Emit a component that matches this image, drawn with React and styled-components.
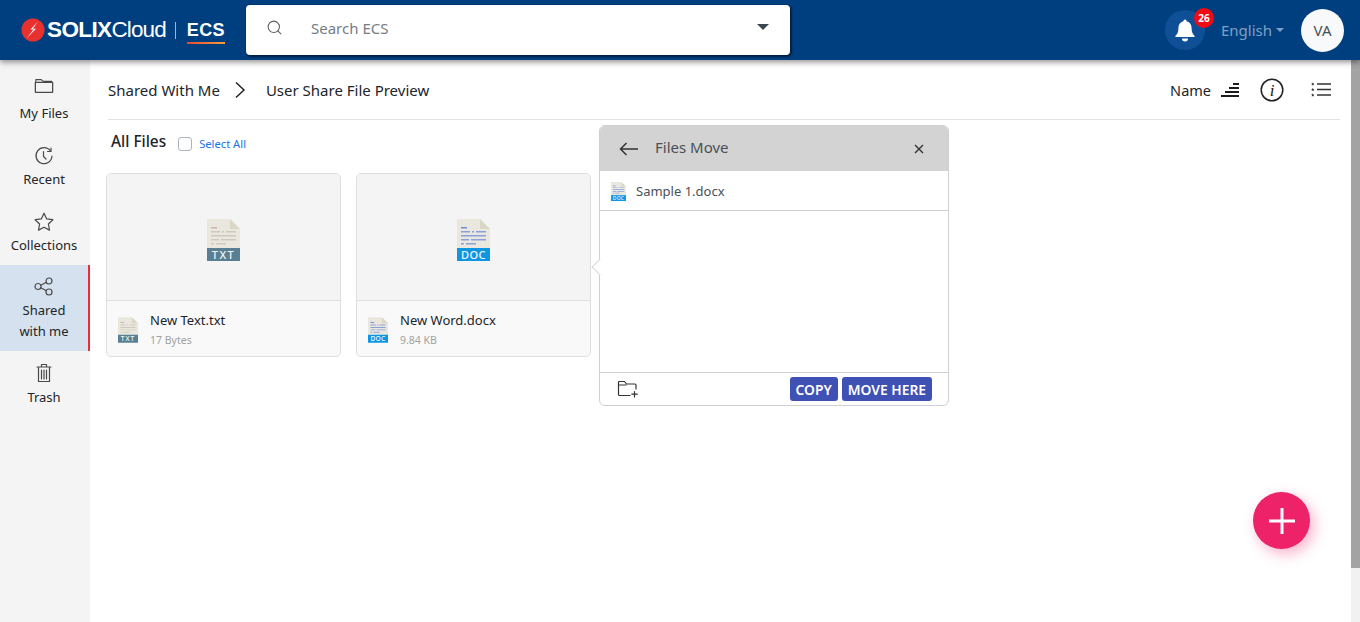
import React from 'react';
import styled, { createGlobalStyle } from 'styled-components';
import { Search } from 'lucide-react';

const GlobalStyle = createGlobalStyle`
  html, body {
    margin: 0;
    height: 100%;
    overflow: hidden;
    background: #fff;
    font-family: "Noto Sans", "Open Sans", sans-serif;
    color: #212529;
  }
  * { box-sizing: border-box; }
`;

const Page = styled.div`
  width: 1360px;
  height: 622px;
  display: flex;
  flex-direction: column;
  position: relative;
  overflow: hidden;
`;

const Header = styled.header`
  height: 60px;
  flex: none;
  background: #003f7f;
  display: flex;
  align-items: center;
  padding: 0 16px 0 21px;
  box-shadow: 0 2px 6px rgba(0, 0, 0, 0.45);
  position: relative;
  z-index: 2;
`;

const Logo = styled.div`
  display: flex;
  align-items: center;
  width: 225px;
  color: #fff;
  font-family: "Liberation Sans", sans-serif;
`;

const LogoBold = styled.span`
  font-weight: 700;
  font-size: 22.5px;
  letter-spacing: -0.6px;
  margin-left: 2px;
`;

const LogoLight = styled.span`
  font-size: 22.5px;
  letter-spacing: -0.9px;
`;

const LogoDivider = styled.span`
  width: 1px;
  height: 17px;
  background: #9db6d0;
  margin: 0 11px 0 9px;
`;

const LogoEcs = styled.span`
  font-weight: 700;
  font-size: 18px;
  letter-spacing: 0.4px;
  line-height: 22px;
  padding-bottom: 1px;
  border-bottom: 2px solid;
  border-image: linear-gradient(90deg, #e8452f, #f3a33b) 1;
  margin-top: 2px;
`;

const SearchBox = styled.div`
  width: 544px;
  height: 50px;
  background: #fff;
  border-radius: 4px;
  box-shadow: 1px 1px 2px 1px rgba(0, 0, 0, 0.5);
  display: flex;
  align-items: center;
  padding: 0 21px 0 20px;
  color: #5f5f5f;
  svg { flex: none; margin-bottom: 5px; }
`;

const SearchText = styled.span`
  flex: 1;
  font-size: 15px;
  color: #757d85;
  margin-left: 28px;
  margin-bottom: 4px;
`;

const Caret = styled.span`
  width: 0;
  height: 0;
  border-left: ${(p) => p.$size}px solid transparent;
  border-right: ${(p) => p.$size}px solid transparent;
  border-top: ${(p) => p.$size}px solid ${(p) => p.$color};
  margin-bottom: ${(p) => p.$lift || 0}px;
`;

const HeaderRight = styled.div`
  margin-left: auto;
  display: flex;
  align-items: center;
`;

const BellWrap = styled.div`
  width: 40px;
  height: 40px;
  border-radius: 50%;
  background: #0e4f96;
  display: flex;
  align-items: center;
  justify-content: center;
  position: relative;
`;

const Badge = styled.span`
  position: absolute;
  top: -2px;
  right: -9px;
  width: 20px;
  height: 20px;
  border-radius: 50%;
  background: #f00a14;
  color: #fff;
  font-size: 10px;
  font-weight: 700;
  display: flex;
  align-items: center;
  justify-content: center;
`;

const Lang = styled.div`
  display: flex;
  align-items: center;
  gap: 4px;
  margin-left: 16px;
  margin-right: 17px;
  font-size: 15px;
  color: #7f9fc4;
`;

const Avatar = styled.div`
  width: 43px;
  height: 43px;
  border-radius: 50%;
  background: #f8f9fa;
  color: #495057;
  font-size: 15px;
  display: flex;
  align-items: center;
  justify-content: center;
`;

const Body = styled.div`
  flex: 1;
  display: flex;
  min-height: 0;
`;

const Sidebar = styled.nav`
  width: 90px;
  flex: none;
  background: #f4f4f4;
  padding-top: 17px;
`;

const NavItem = styled.div`
  display: flex;
  flex-direction: column;
  align-items: center;
  height: ${(p) => p.$height}px;
  padding-top: ${(p) => p.$top || 0}px;
  font-size: 13px;
  line-height: 21px;
  text-align: center;
  color: #212529;
  background: ${(p) => (p.$active ? '#d5e1ee' : 'transparent')};
  border-right: 2px solid ${(p) => (p.$active ? '#ee2b36' : 'transparent')};
  svg { display: block; margin-bottom: ${(p) => p.$gap}px; }
`;

const Main = styled.main`
  flex: 1;
  min-width: 0;
  position: relative;
  padding: 0 11px 0 16px;
`;

const TopRow = styled.div`
  height: 60px;
  margin-left: 2px;
  border-bottom: 1px solid #e3e3e3;
  display: flex;
  align-items: center;
  font-size: 15px;
`;

const Crumb = styled.span`
  white-space: nowrap;
`;

const CrumbSep = styled.span`
  display: flex;
  margin: 0 20px 0 14px;
`;

const Tools = styled.div`
  margin-left: auto;
  display: flex;
  align-items: center;
  padding-right: 9px;
`;

const ToolLabel = styled.span`
  font-size: 14.5px;
  margin-right: 10px;
`;

const ToolIcon = styled.span`
  display: flex;
  margin-left: ${(p) => p.$gap || 0}px;
`;

const FilesHead = styled.div`
  display: flex;
  align-items: center;
  height: 44px;
  padding-left: 5px;
`;

const FilesTitle = styled.span`
  font-size: 15.4px;
  font-weight: 500;
  margin-top: -2px;
`;

const Check = styled.span`
  width: 14px;
  height: 14px;
  border: 1px solid #adb5bd;
  border-radius: 3px;
  background: #fff;
  margin: 4px 0 0 12px;
`;

const SelectAll = styled.span`
  font-size: 11.2px;
  color: #1a73e8;
  margin: 2px 0 0 7px;
`;

const Cards = styled.div`
  display: flex;
  gap: 15px;
  margin-top: 9px;
`;

const Card = styled.div`
  width: 235px;
  height: 184px;
  border: 1px solid #dfdfdf;
  border-radius: 5px;
  background: #f9f9f9;
  overflow: hidden;
`;

const Thumb = styled.div`
  height: 127px;
  background: #f4f4f4;
  border-bottom: 1px solid #dfdfdf;
  padding-top: 5px;
  display: flex;
  align-items: center;
  justify-content: center;
`;

const CardInfo = styled.div`
  display: flex;
  align-items: center;
  padding: 2px 0 0 11px;
  height: 55px;
`;

const CardText = styled.div`
  margin-left: 12px;
  margin-top: 1px;
`;

const CardName = styled.div`
  font-size: 13px;
  line-height: 20px;
`;

const CardSize = styled.div`
  font-size: 10.5px;
  line-height: 20px;
  color: #a1a1a1;
`;

const Popover = styled.div`
  position: absolute;
  left: 509px;
  top: 65px;
  width: 350px;
  height: 281px;
  background: #fff;
  border: 1px solid #cfcfcf;
  border-radius: 6px;
  display: flex;
  flex-direction: column;
  &::before {
    content: '';
    position: absolute;
    left: -6px;
    top: 135px;
    width: 11px;
    height: 11px;
    background: #fff;
    border-left: 1px solid #d8d8d8;
    border-bottom: 1px solid #d8d8d8;
    transform: rotate(45deg);
  }
`;

const PopHead = styled.div`
  height: 45px;
  flex: none;
  background: #d3d3d3;
  border-radius: 5px 5px 0 0;
  display: flex;
  align-items: center;
  padding: 0 24px 0 19px;
  font-size: 15px;
  color: #495057;
`;

const PopTitle = styled.span`
  flex: 1;
  margin-left: 16px;
  margin-top: -4px;
`;

const PopFile = styled.div`
  height: 40px;
  flex: none;
  border-top: 1px solid #fff;
  border-bottom: 1px solid #cfcfcf;
  display: flex;
  align-items: center;
  padding-left: 11px;
  font-size: 13px;
  color: #495057;
  gap: 10px;
`;

const PopBody = styled.div`
  flex: 1;
`;

const PopFooter = styled.div`
  height: 33px;
  flex: none;
  border-top: 1px solid #cfcfcf;
  display: flex;
  align-items: center;
  padding: 0 16px 0 17px;
  gap: 4px;
`;

const FolderBtn = styled.span`
  display: flex;
  margin-right: auto;
`;

const ActionBtn = styled.button`
  height: 24px;
  border: 0;
  border-radius: 3px;
  background: #3f51b5;
  color: #fff;
  font-family: inherit;
  font-size: 13.8px;
  font-weight: 600;
  padding: 0 6px;
  white-space: nowrap;
`;

const Fab = styled.button`
  position: absolute;
  right: 41px;
  top: 432px;
  width: 57px;
  height: 57px;
  padding: 0;
  border: 0;
  border-radius: 50%;
  background: #ee2268;
  box-shadow: 4px 5px 14px rgba(238, 34, 104, 0.35);
  display: flex;
  align-items: center;
  justify-content: center;
`;

const ScrollTrack = styled.div`
  width: 9px;
  flex: none;
  background: #f1f1f1;
`;

const ScrollThumb = styled.div`
  height: 508px;
  background: #a3a3a3;
`;

const FileIcon = ({ kind, size }) => {
  const band = kind === 'DOC' ? '#0f96e2' : '#5a7f93';
  const line = kind === 'DOC' ? '#8aa0dd' : '#cfc8bc';
  const head = kind === 'DOC' ? '#6f8fd8' : '#cdb4ae';
  const w = size === 'lg' ? 33 : size === 'md' ? 20 : 15;
  const h = size === 'lg' ? 42 : size === 'md' ? 26 : 19;
  return (
    <svg width={w} height={h} viewBox="0 0 33 42" style={{ flex: 'none' }}>
      <path d="M0 0h23l10 10v20H0z" fill="#eae8de" />
      <path d="M23 0l10 10H23z" fill="#d9d7c5" />
      <path d="M4 8h6v1.5H4z" fill={head} />
      <path d="M4 12h9v1.5H4zM15 12h2v1.5h-2zM19 12h10v1.5H19zM4 16h25v1.5H4zM4 20h8v1.5H4zM14 20h15v1.5H14zM4 24h3v1.5H4zM9 24h10v1.5H9z" fill={line} />
      <path d="M0 29h33v13H0z" fill={band} />
      <text x="16.5" y="39.5" textAnchor="middle" fontSize="11" fontWeight="500" fill="#f2f5f7" letterSpacing={kind === 'TXT' ? 1.5 : 0.5} fontFamily="Noto Sans, sans-serif">{kind}</text>
    </svg>
  );
};

const strokeProps = { fill: 'none', stroke: '#4a4a4a', strokeWidth: 1.2, strokeLinecap: 'round', strokeLinejoin: 'round' };

const FolderIcon = () => (
  <svg width="20" height="17" viewBox="0 0 22 18" {...strokeProps}>
    <path d="M1.5 16.5V5.5h19v11z" strokeWidth="1.4" />
    <path d="M2 5V2.5h6l2 2h9.5v1" />
  </svg>
);

const RecentIcon = () => (
  <svg width="20" height="20" viewBox="0 0 20 20" {...strokeProps}>
    <path d="M16.5 5A8 8 0 1 0 18 10" />
    <path d="M13.5 5.5h3.5V2M9.5 5.5V10.5L12 13" />
  </svg>
);

const StarIcon = () => (
  <svg width="20" height="19" viewBox="0 0 20 19" {...strokeProps}>
    <path d="M10 1.2l2.7 5.7 6.2.8-4.5 4.3 1.1 6.1L10 15.2l-5.5 2.9 1.1-6.1L1.1 7.7l6.2-.8z" />
  </svg>
);

const ShareIcon = () => (
  <svg width="20" height="19" viewBox="0 0 20 19" {...strokeProps}>
    <circle cx="15" cy="4" r="3" />
    <circle cx="15" cy="15" r="3" />
    <circle cx="4" cy="9.5" r="3" />
    <path d="M6.8 8.2l5.6-3M6.8 10.8l5.6 3" />
  </svg>
);

const TrashIcon = () => (
  <svg width="16" height="20" viewBox="0 0 16 20" {...strokeProps}>
    <path d="M1 4h14M5.5 4V1.5h5V4M2.5 4v14.5h11V4M5.5 7v9M8 7v9M10.5 7v9" />
  </svg>
);

const BoltLogo = () => (
  <svg width="24" height="24" viewBox="0 0 24 24">
    <circle cx="12" cy="12" r="11.5" fill="#e8302e" />
    <path d="M17 3.5L9.5 11.5h3L5.5 20.5l9.5-9.7h-3.2L17 3.5z" fill="#fff" />
  </svg>
);

const BellIcon = () => (
  <svg width="22" height="24" viewBox="0 0 22 24" fill="#fff">
    <path d="M11 1.5a1.6 1.6 0 0 1 1.6 1.7c3.4.8 5 3.6 5 7 0 4 1 5.6 3 7.8V19H1.4v-1c2-2.2 3-3.8 3-7.8 0-3.4 1.6-6.2 5-7A1.6 1.6 0 0 1 11 1.5z" />
    <path d="M8 20.5h6a3 3 0 0 1-6 0z" />
  </svg>
);

const SortIcon = () => (
  <svg width="18" height="14" viewBox="0 0 18 14" fill="#1c1c1c">
    <path d="M12 0h6v2h-6zM8 4h10v2H8zM4 8h14v2H4zM0 12h18v2H0z" />
  </svg>
);

const InfoIcon = () => (
  <svg width="24" height="24" viewBox="0 0 24 24">
    <circle cx="12" cy="12" r="10.8" fill="none" stroke="#222" strokeWidth="1.5" />
    <text x="12" y="18" textAnchor="middle" fontFamily="Liberation Serif, serif" fontStyle="italic" fontSize="17" fill="#222">i</text>
  </svg>
);

const star = 'l.5 1.1 1.2.1-.9.8.3 1.2-1.1-.6-1.1.6.3-1.2-.9-.8 1.2-.1z';

const ListIcon = () => (
  <svg width="20" height="15" viewBox="0 0 20 15" fill="#333">
    <path d="M6 1.2h14v1.5H6zM6 6.7h14v1.5H6zM6 12.2h14v1.5H6z" />
    <path d={`M1.8.3${star}M1.8 5.8${star}M1.8 11.3${star}`} />
  </svg>
);

const ChevronIcon = () => (
  <svg width="12" height="18" viewBox="0 0 12 18" fill="none" stroke="#222" strokeWidth="1.5">
    <path d="M2 1.5L10 9l-8 7.5" />
  </svg>
);

const BackIcon = () => (
  <svg width="20" height="14" viewBox="0 0 20 14" fill="none" stroke="#333" strokeWidth="1.5">
    <path d="M19 7H1.5M7.5 1L1.5 7l6 6" />
  </svg>
);

const CloseIcon = () => (
  <svg width="10" height="10" viewBox="0 0 10 10" fill="none" stroke="#333" strokeWidth="1.4">
    <path d="M1 1l8 8M9 1l-8 8" />
  </svg>
);

const NewFolderIcon = () => (
  <svg width="22" height="18" viewBox="0 0 22 18" fill="none" stroke="#333" strokeWidth="1.2" strokeLinecap="round">
    <path d="M1.5 14.5V2.5a1 1 0 0 1 1-1h5l2 2.5h8.5a1 1 0 0 1 1 1v4M1.5 14.5a1 1 0 0 0 1 1H13M2 5h7" />
    <path d="M17.5 11.5v5.5M14.8 14.2h5.5" />
  </svg>
);

const PlusIcon = () => (
  <svg width="26" height="26" viewBox="0 0 26 26" fill="#fff">
    <path d="M11.5 0h3v11.5H26v3H14.5V26h-3V14.5H0v-3h11.5z" />
  </svg>
);

const files = [
  { name: 'New Text.txt', size: '17 Bytes', kind: 'TXT' },
  { name: 'New Word.docx', size: '9.84 KB', kind: 'DOC' },
];

const App = () => {
  return (
    <Page>
      <GlobalStyle />
      <Header>
        <Logo>
          <BoltLogo />
          <LogoBold>SOLIX</LogoBold>
          <LogoLight>Cloud</LogoLight>
          <LogoDivider />
          <LogoEcs>ECS</LogoEcs>
        </Logo>
        <SearchBox>
          <Search size={17} strokeWidth={1.5} />
          <SearchText>Search ECS</SearchText>
          <Caret $size={6} $color="#3c4650" $lift={6} />
        </SearchBox>
        <HeaderRight>
          <BellWrap>
            <BellIcon />
            <Badge>26</Badge>
          </BellWrap>
          <Lang>
            English
            <Caret $size={4.5} $color="#7f9fc4" />
          </Lang>
          <Avatar>VA</Avatar>
        </HeaderRight>
      </Header>
      <Body>
        <Sidebar>
          <NavItem $height={67} $gap={9}><FolderIcon />My Files</NavItem>
          <NavItem $height={66} $top={2} $gap={3}><RecentIcon />Recent</NavItem>
          <NavItem $height={55} $top={2} $gap={4}><StarIcon />Collections</NavItem>
          <NavItem $height={86} $top={12} $gap={4} $active><ShareIcon />Shared<br />with me</NavItem>
          <NavItem $height={66} $top={12} $gap={4}><TrashIcon />Trash</NavItem>
        </Sidebar>
        <Main>
          <TopRow>
            <Crumb>Shared With Me</Crumb>
            <CrumbSep><ChevronIcon /></CrumbSep>
            <Crumb>User Share File Preview</Crumb>
            <Tools>
              <ToolLabel>Name</ToolLabel>
              <ToolIcon><SortIcon /></ToolIcon>
              <ToolIcon $gap={21}><InfoIcon /></ToolIcon>
              <ToolIcon $gap={27}><ListIcon /></ToolIcon>
            </Tools>
          </TopRow>
          <FilesHead>
            <FilesTitle>All Files</FilesTitle>
            <Check />
            <SelectAll>Select All</SelectAll>
          </FilesHead>
          <Cards>
            {files.map((file) => (
              <Card key={file.name}>
                <Thumb><FileIcon kind={file.kind} size="lg" /></Thumb>
                <CardInfo>
                  <FileIcon kind={file.kind} size="md" />
                  <CardText>
                    <CardName>{file.name}</CardName>
                    <CardSize>{file.size}</CardSize>
                  </CardText>
                </CardInfo>
              </Card>
            ))}
          </Cards>
          <Popover>
            <PopHead>
              <BackIcon />
              <PopTitle>Files Move</PopTitle>
              <CloseIcon />
            </PopHead>
            <PopFile>
              <FileIcon kind="DOC" size="sm" />
              Sample 1.docx
            </PopFile>
            <PopBody />
            <PopFooter>
              <FolderBtn><NewFolderIcon /></FolderBtn>
              <ActionBtn>COPY</ActionBtn>
              <ActionBtn>MOVE HERE</ActionBtn>
            </PopFooter>
          </Popover>
          <Fab><PlusIcon /></Fab>
        </Main>
        <ScrollTrack><ScrollThumb /></ScrollTrack>
      </Body>
    </Page>
  );
};

export default App;
